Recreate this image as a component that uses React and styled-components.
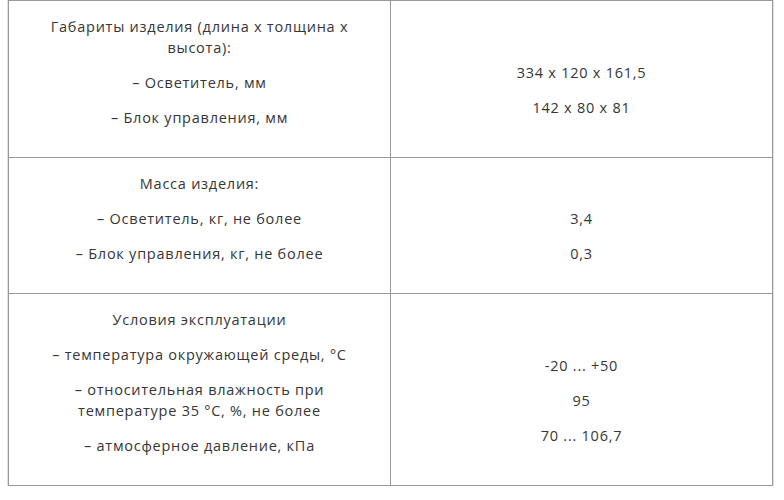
import React from "react";
import styled, { createGlobalStyle } from "styled-components";

const GlobalStyle = createGlobalStyle`
  html, body {
    margin: 0;
    padding: 0;
    background: #ffffff;
  }
  body {
    padding: 0 8px;
    font-family: "Open Sans", "Noto Sans", sans-serif;
  }
`;

const Table = styled.table`
  width: 765px;
  border-collapse: collapse;
  table-layout: fixed;
  border: 1px solid #999999;
  box-shadow: 0 0 0 1px #e2e2e2;
  color: #363636;
  font-size: 14.5px;
  letter-spacing: 0.75px;
  line-height: 21px;
`;

const Cell = styled.td`
  width: 50%;
  border: 1px solid #999999;
  padding: 15px 15px;
  text-align: center;
  vertical-align: middle;
`;

const Para = styled.p`
  margin: 0 0 14px;
  min-height: 21px;
`;

const rows = [
  {
    left: [
      "Габариты изделия (длина x толщина x высота):",
      "– Осветитель, мм",
      "– Блок управления, мм",
    ],
    right: ["", "334 x 120 x 161,5", "142 x 80 x 81"],
  },
  {
    left: [
      "Масса изделия:",
      "– Осветитель, кг, не более",
      "– Блок управления, кг, не более",
    ],
    right: ["", "3,4", "0,3"],
  },
  {
    left: [
      "Условия эксплуатации",
      "– температура окружающей среды, °C",
      "– относительная влажность при температуре 35 °C, %, не более",
      "– атмосферное давление, кПа",
    ],
    right: ["", "-20 ... +50", "95", "70 ... 106,7"],
  },
];

export default function App() {
  return (
    <>
      <GlobalStyle />
      <Table>
        <tbody>
          {rows.map((row, i) => (
            <tr key={i}>
              <Cell>
                {row.left.map((t, j) => (
                  <Para key={j}>{t}</Para>
                ))}
              </Cell>
              <Cell>
                {row.right.map((t, j) => (
                  <Para key={j}>{t || "\u00a0"}</Para>
                ))}
              </Cell>
            </tr>
          ))}
        </tbody>
      </Table>
    </>
  );
}
